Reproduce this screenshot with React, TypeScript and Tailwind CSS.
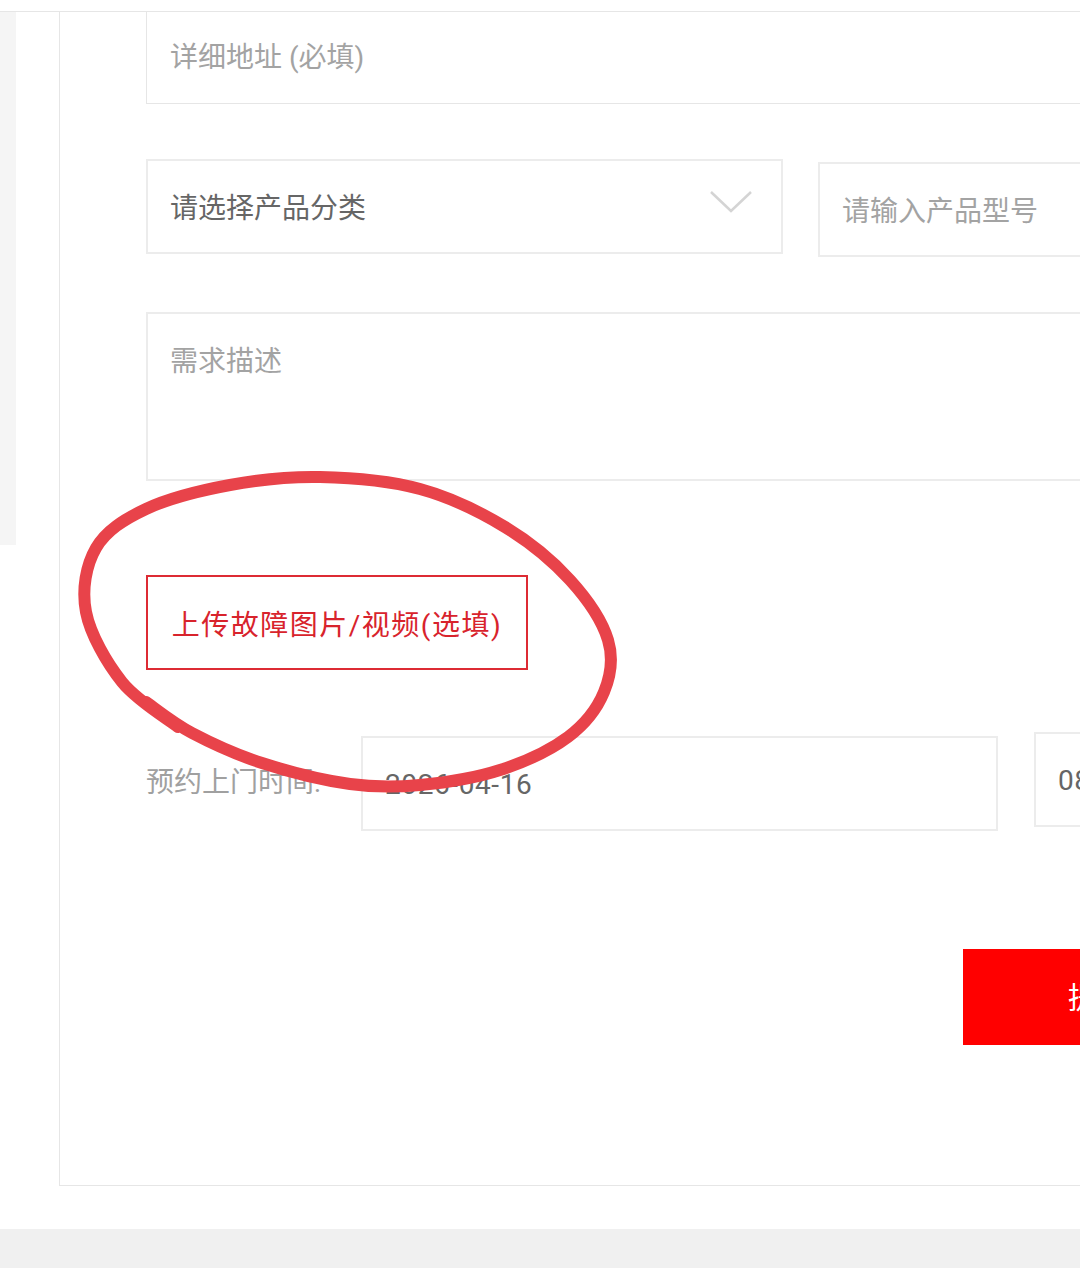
import React from "react";

const font = { fontFamily: 'Roboto, "Noto Sans CJK SC", "Noto Sans", sans-serif' };

// hand-drawn loop around the upload button (annotation drawn over the page)
const loop: [number, number][] = [
  [178, 727],
  [122, 682],
  [86, 612],
  [96, 548],
  [146, 509],
  [230, 485],
  [320, 477],
  [420, 489],
  [505, 527],
  [570, 580],
  [608, 640],
  [604, 692],
  [568, 737],
  [500, 770],
  [420, 785],
  [350, 784],
  [262, 763],
  [192, 733],
  [146, 702],
];

function smoothPath(pts: [number, number][]) {
  let d = `M ${pts[0][0]} ${pts[0][1]}`;
  for (let i = 0; i < pts.length - 1; i++) {
    const p0 = pts[i - 1] || pts[i];
    const p1 = pts[i];
    const p2 = pts[i + 1];
    const p3 = pts[i + 2] || p2;
    const c1x = p1[0] + (p2[0] - p0[0]) / 6;
    const c1y = p1[1] + (p2[1] - p0[1]) / 6;
    const c2x = p2[0] - (p3[0] - p1[0]) / 6;
    const c2y = p2[1] - (p3[1] - p1[1]) / 6;
    d += ` C ${c1x} ${c1y}, ${c2x} ${c2y}, ${p2[0]} ${p2[1]}`;
  }
  return d;
}

export default function App() {
  return (
    <div className="relative w-[1080px] h-[1268px] overflow-hidden bg-white" style={font}>
      {/* Top divider */}
      <div className="h-[12px] border-b border-[#e6e6e6]" />

      <div className="flex w-[1500px]">
        {/* Left side strip */}
        <div className="w-[16px] h-[533px] bg-[#f5f5f5] shrink-0" />

        {/* Form card */}
        <div className="ml-[43px] w-[1400px] h-[1174px] border-l border-b border-[#e6e6e6] pl-[86px]">
          {/* Address */}
          <div className="w-[1100px] h-[92px] border-x border-b border-[#e6e6e6] flex items-center pl-[23px]">
            <span className="text-[28px] text-[#a3a3a3]">详细地址 (必填)</span>
          </div>

          {/* Category + model */}
          <div className="flex items-start mt-[55px]">
            <div className="w-[637px] h-[95px] border-2 border-[#ececec] flex items-center justify-between pl-[22px] pr-[26px]">
              <span className="text-[28px] text-[#666666] pt-[5px]">请选择产品分类</span>
              <svg width="48" height="28" viewBox="0 0 48 28" className="-mt-[10px]">
                <path d="M4 4 L24 23 L44 4" fill="none" stroke="#d4d4d4" strokeWidth="2.5" />
              </svg>
            </div>
            <div className="ml-[35px] mt-[3px] w-[400px] h-[95px] border-2 border-[#ececec] flex items-center pl-[22px] pt-[4px]">
              <span className="text-[28px] text-[#a3a3a3]">请输入产品型号</span>
            </div>
          </div>

          {/* Description */}
          <div className="mt-[55px] w-[1100px] h-[169px] border-2 border-[#ececec] pl-[22px] pt-[27px]">
            <span className="text-[28px] text-[#a3a3a3]">需求描述</span>
          </div>

          {/* Upload */}
          <div className="mt-[94px] w-[382px] h-[95px] border-2 border-[#dd2b34] flex items-center justify-center pt-[6px]">
            <span className="text-[28px] tracking-[1.5px] text-[#d8232c]">上传故障图片/视频(选填)</span>
          </div>

          {/* Appointment time */}
          <div className="flex items-start mt-[62px]">
            <div className="w-[215px] h-[98px] flex items-center pt-[4px]">
              <span className="text-[28px] text-[#a0a0a0]">预约上门时间:</span>
            </div>
            <div className="mt-[4px] w-[637px] h-[95px] border-2 border-[#ececec] flex items-center pl-[22px] pt-[2px]">
              <span className="text-[28px] tracking-[0.6px] text-[#666666]">2026-04-16</span>
            </div>
            <div className="ml-[36px] w-[300px] h-[95px] border-2 border-[#ececec] flex items-center pl-[22px] pt-[2px]">
              <span className="text-[28px] tracking-[0.6px] text-[#666666]">08:00-12:00</span>
            </div>
          </div>

          {/* Submit */}
          <div className="mt-[118px] ml-[817px] w-[320px] h-[96px] bg-[#ff0000] flex items-center pl-[105px]">
            <span className="text-[30px] text-white">提交</span>
          </div>
        </div>
      </div>

      {/* Footer band */}
      <div className="mt-[43px] h-[40px] bg-[#f0f0f0]" />

      {/* Red annotation loop */}
      <svg className="absolute left-0 top-0 pointer-events-none" width="1080" height="1268">
        <path
          d={smoothPath(loop)}
          fill="none"
          stroke="#e8434a"
          strokeWidth="12"
          strokeLinecap="round"
          strokeLinejoin="round"
        />
      </svg>
    </div>
  );
}
